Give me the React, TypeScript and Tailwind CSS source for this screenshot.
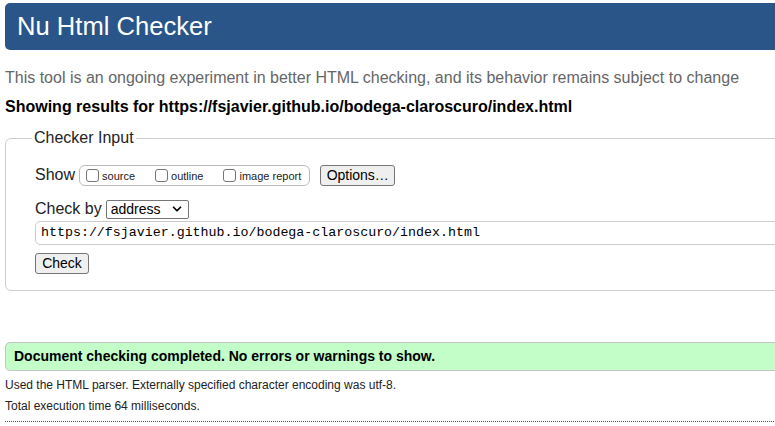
import { ChevronDown } from 'lucide-react';

const sans = { fontFamily: '"Liberation Sans", Arial, sans-serif' };

const ShowBox = () => (
  <div className="flex h-[21px] items-center rounded-[6px] border border-[#bbb] pl-[6px] pr-[8px] text-[11px] text-[#222]">
    {['source', 'outline', 'image report'].map((label, i) => (
      <label key={label} className={`flex items-center ${i > 0 ? 'ml-[20px]' : ''}`}>
        <span className="mr-[3px] inline-block h-[13px] w-[13px] rounded-[3px] border border-[#767676] bg-white" />
        <span className="mt-[3px]">{label}</span>
      </label>
    ))}
  </div>
);

const Button = ({ children, w }: { children: string; w: string }) => (
  <button
    className={`flex h-[21px] items-center justify-center rounded-[3px] border border-[#767676] bg-[#efefef] text-[14px] text-black ${w}`}
  >
    {children}
  </button>
);

export default function App() {
  return (
    <div className="h-[426px] w-full overflow-hidden bg-white" style={sans}>
      <div className="w-[800px] pl-[5px] pt-[3px]">
        <div className="flex h-[47px] items-center rounded-l-[5px] bg-[#2a5589] pl-[12px]">
          <h1 className="text-[25.6px] leading-none text-white">Nu Html Checker</h1>
        </div>

        <p className="mt-[18px] text-[16px] leading-[20px] text-[#666]">
          This tool is an ongoing experiment in better HTML checking, and its behavior remains subject to change
        </p>
        <p className="mt-[9px] text-[16px] font-bold leading-[20px] text-black">
          Showing results for https://fsjavier.github.io/bodega-claroscuro/index.html
        </p>

        <fieldset className="mt-[11px] h-[163px] rounded-l-[6px] border border-[#ccc] pb-[10px] pl-[29px] pr-0">
          <legend className="-ml-[3px] px-[2px] text-[16px] leading-[20px] text-[#222]">Checker Input</legend>
          <div className="mt-[15px] flex items-center">
            <span className="mr-[4px] text-[16px] text-[#222]">Show</span>
            <ShowBox />
            <div className="ml-[10px]">
              <Button w="w-[75px]">Options…</Button>
            </div>
          </div>
          <div className="mt-[10px] flex items-center">
            <span className="mr-[4px] text-[16px] text-[#222]">Check by</span>
            <div className="flex h-[19px] w-[83px] items-center justify-between rounded-[2px] border border-[#767676] pl-[4px] pr-[4px] text-[14px] text-black">
              <span>address</span>
              <ChevronDown className="h-[14px] w-[14px]" strokeWidth={3} />
            </div>
          </div>
          <div
            className="flex h-[24px] items-center rounded-l-[5px] border border-[#ccc] pl-[5px] text-[13.3px] text-black"
            style={{ fontFamily: '"Liberation Mono", "DejaVu Sans Mono", monospace' }}
          >
            https://fsjavier.github.io/bodega-claroscuro/index.html
          </div>
          <div className="mt-[8px]">
            <Button w="w-[54px]">Check</Button>
          </div>
        </fieldset>

        <div className="mt-[51px] flex h-[29px] items-center rounded-l-[5px] border border-[#c4c4c4] bg-[#c3fdc8] pl-[8px]">
          <p className="text-[14px] font-bold text-black">Document checking completed. No errors or warnings to show.</p>
        </div>

        <p className="mt-[7px] text-[12px] leading-[14px] text-[#222]">
          Used the HTML parser. Externally specified character encoding was utf-8.
        </p>
        <p className="mt-[7px] text-[12px] leading-[14px] text-[#222]">Total execution time 64 milliseconds.</p>
        <div className="mt-[8px] border-t border-dotted border-[#555]" />
      </div>
    </div>
  );
}
